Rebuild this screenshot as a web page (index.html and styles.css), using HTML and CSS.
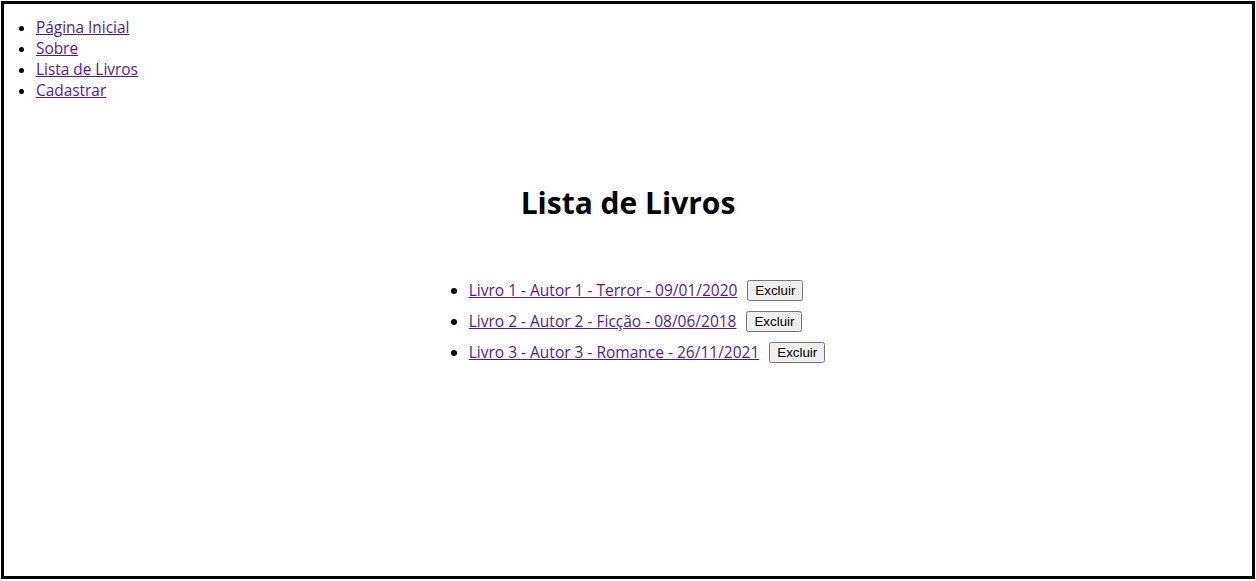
FILE: index.html
```html
<!DOCTYPE html>
<html lang="pt-BR">
<head>
<meta charset="utf-8">
<title>Lista de Livros</title>
<link rel="stylesheet" href="styles.css">
</head>
<body>
<div class="page">
  <nav>
    <ul class="nav-list">
      <li><a href="#">Página Inicial</a></li>
      <li><a href="#">Sobre</a></li>
      <li><a href="#">Lista de Livros</a></li>
      <li><a href="#">Cadastrar</a></li>
    </ul>
  </nav>
  <main class="content">
    <h1 class="title">Lista de Livros</h1>
    <ul class="book-list">
      <li><a href="#">Livro 1 - Autor 1 - Terror - 09/01/2020</a><button class="btn">Excluir</button></li>
      <li><a href="#">Livro 2 - Autor 2 - Ficção - 08/06/2018</a><button class="btn">Excluir</button></li>
      <li><a href="#">Livro 3 - Autor 3 - Romance - 26/11/2021</a><button class="btn">Excluir</button></li>
    </ul>
  </main>
</div>
</body>
</html>
```
FILE: styles.css
```css
html, body {
  margin: 0;
  padding: 0;
  background: #fff;
}
body {
  font-family: "Open Sans", "Noto Sans", sans-serif;
  font-size: 15.4px;
  line-height: 21px;
  color: #000;
}
.page {
  box-sizing: border-box;
  margin: 1px 1px 2px 1px;
  height: calc(100vh - 3px);
  border: 3px solid #000;
  overflow: hidden;
}
a {
  color: #551a8b;
  text-decoration: underline;
}
.nav-list {
  margin: 13px 0 0 0;
  padding-left: 32px;
}
.content {
  display: flex;
  flex-direction: column;
  align-items: center;
}
.title {
  margin: 82px 0 0 0;
  font-size: 30px;
  line-height: 40px;
  font-weight: 700;
}
.book-list {
  margin: 57px 0 0 0;
  padding-left: 38px;
  font-size: 15.5px;
}
.book-list li {
  margin-bottom: 10px;
}
.btn {
  margin-left: 10px;
  font-family: "Liberation Sans", Arial, sans-serif;
  font-size: 13.3333px;
  vertical-align: 1px;
}
```
